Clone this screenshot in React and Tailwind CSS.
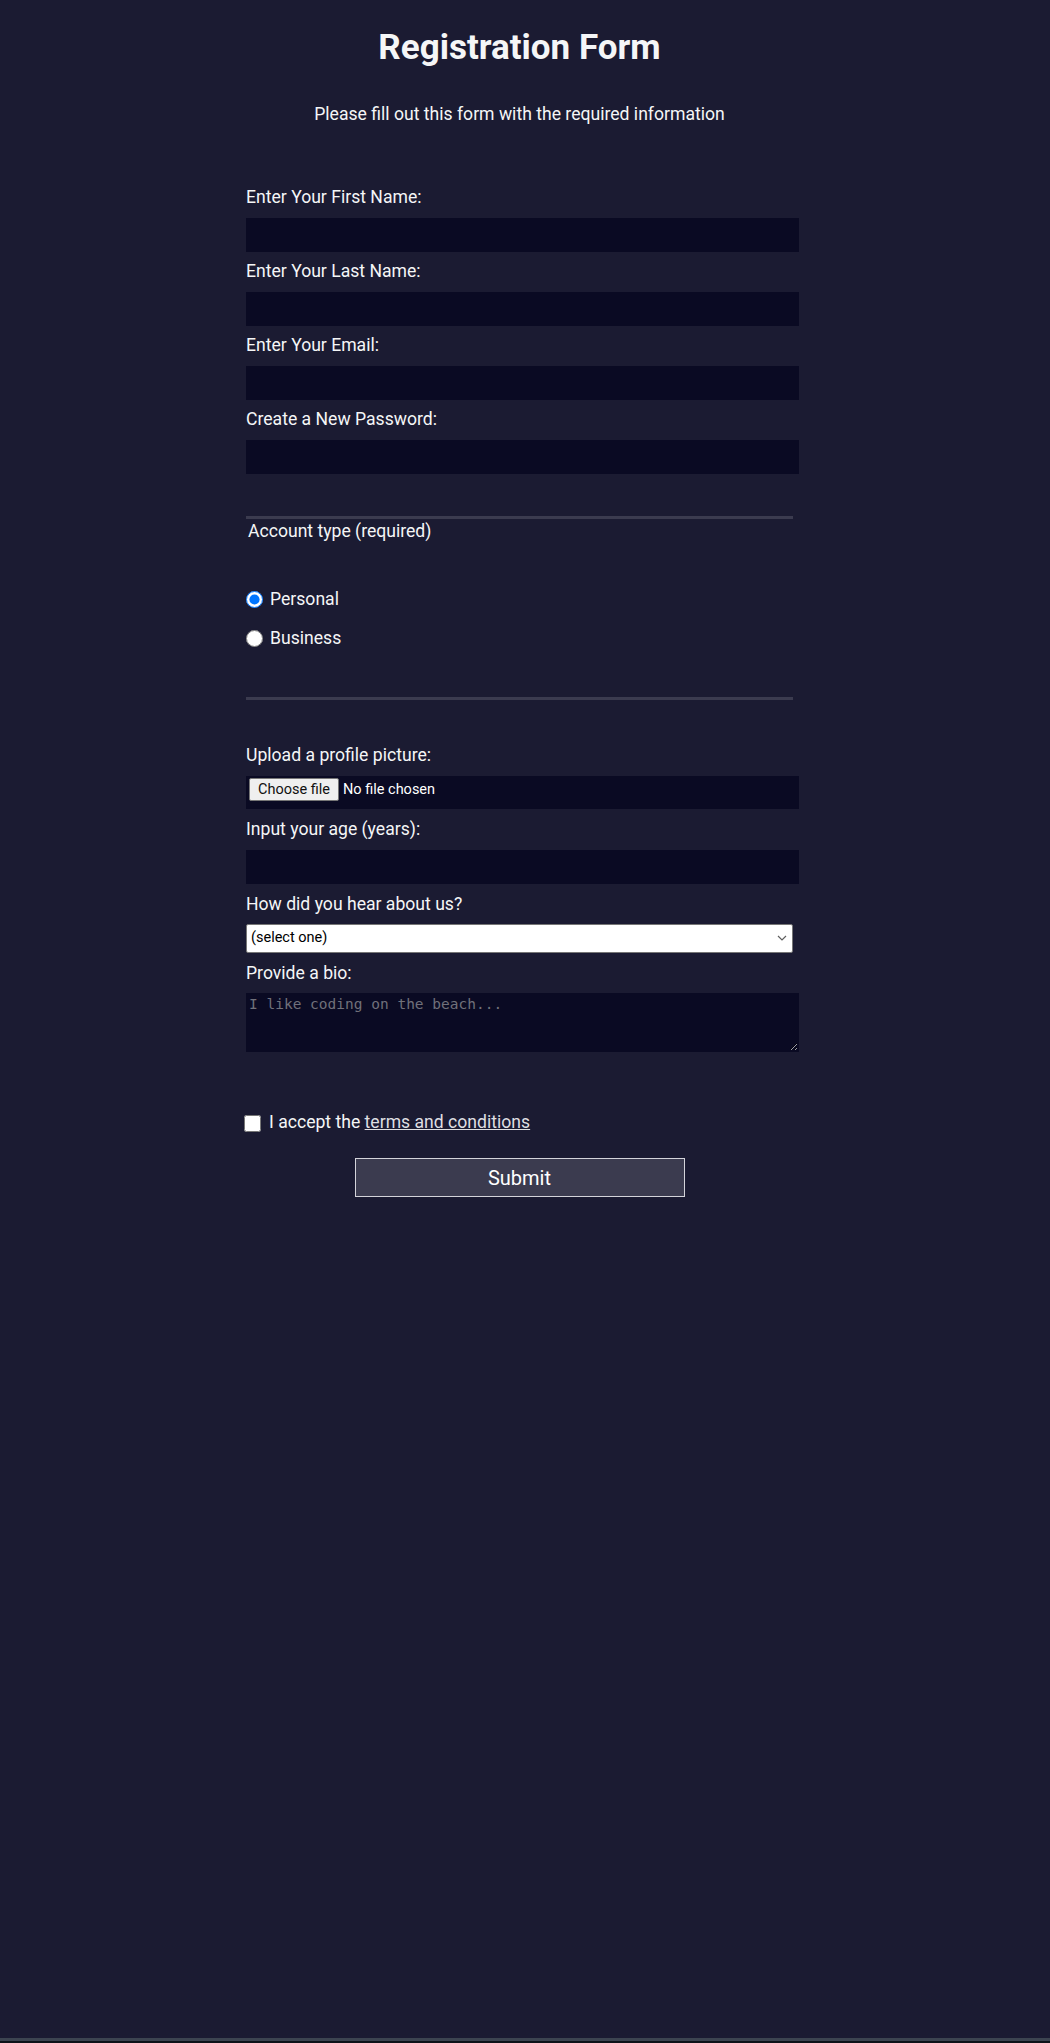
const inputCls = 'block w-[553px] h-[34px] bg-[#0a0a23] border border-[#0a0a23] text-white px-[2px] outline-none'

function Field({ label, gap = 'mt-[8.5px]', children }) {
  return (
    <label className={`block ${gap}`}>
      <span className="block">{label}</span>
      <span className="block mt-[9.5px]">{children}</span>
    </label>
  )
}

export default function App() {
  return (
    <div className="h-[2043px] overflow-hidden flex flex-col bg-[#1b1b32] text-[#f5f6f7] font-['Roboto',sans-serif] text-[17.6px] leading-[22px]">
      <div className="w-[1039px] flex-1 pt-[27px]">
        <h1 className="text-center text-[35px] leading-[42px] font-bold">Registration Form</h1>
        <p className="mt-[34px] text-center">Please fill out this form with the required information</p>

        <form className="w-[547px] mx-auto mt-[61px]">
          <div className="pb-[42px] border-b-[3px] border-[#3b3b4f]">
            <Field label="Enter Your First Name:" gap="">
              <input type="text" className={inputCls} />
            </Field>
            <Field label="Enter Your Last Name:">
              <input type="text" className={inputCls} />
            </Field>
            <Field label="Enter Your Email:">
              <input type="email" className={inputCls} />
            </Field>
            <Field label="Create a New Password:">
              <input type="password" className={inputCls} />
            </Field>
          </div>

          <div className="pt-[1.3px] pb-[48px] border-b-[3px] border-[#3b3b4f]">
            <p className="pl-[2px]">Account type (required)</p>
            <label className="flex items-start gap-[7px] mt-[46px]">
              <input type="radio" name="account-type" defaultChecked className="w-[17px] h-[17px] m-0 mt-[3.5px]" />
              Personal
            </label>
            <label className="flex items-start gap-[7px] mt-[17px]">
              <input type="radio" name="account-type" className="w-[17px] h-[17px] m-0 mt-[3px]" />
              Business
            </label>
          </div>

          <div className="pt-[44.5px]">
            <Field label="Upload a profile picture:" gap="">
              <span className="flex items-start w-[553px] h-[33.5px] bg-[#0a0a23] pl-[3px] pt-[2.5px]">
                <span className="flex items-center gap-[4px] text-[14.5px]">
                  <span className="h-[23px] px-[8px] flex items-center bg-[#efefef] text-[#111] border border-[#767676] rounded-[2px]">Choose file</span>
                  <span className="text-white">No file chosen</span>
                </span>
              </span>
            </Field>
            <Field label="Input your age (years):" gap="mt-[9px]">
              <input type="number" className={inputCls} />
            </Field>
            <Field label="How did you hear about us?" gap="mt-[9px]">
              <span className="relative block w-[547px]">
                <select className="block w-full h-[28.3px] appearance-none bg-white text-black text-[14.5px] border border-[#767676] rounded-[2px] pl-[4px]">
                  <option>(select one)</option>
                  <option>freeCodeCamp News</option>
                  <option>freeCodeCamp YouTube Channel</option>
                  <option>freeCodeCamp Forum</option>
                  <option>Other</option>
                </select>
                <svg className="absolute right-[6px] top-[11px] pointer-events-none" width="10" height="6" viewBox="0 0 10 6" fill="none">
                  <path d="M1 1l4 4 4-4" stroke="#5f5f5f" strokeWidth="1.2" />
                </svg>
              </span>
            </Field>
            <Field label="Provide a bio:" gap="mt-[9px]">
              <textarea
                rows={3}
                placeholder="I like coding on the beach..."
                className="block w-[553px] h-[59px] bg-[#0a0a23] border border-[#0a0a23] text-white p-[2px] font-['DejaVu_Sans_Mono',monospace] text-[14.5px] leading-[17px] placeholder:text-[#70707a] outline-none"
              />
            </Field>
          </div>

          <label className="flex items-start gap-[8px] mt-[59px] -ml-[2px]">
            <input type="checkbox" className="w-[17px] h-[17px] m-0 mt-[3.5px]" />
            <span>
              I accept the <a href="#" className="text-[#dfdfe2] underline">terms and conditions</a>
            </span>
          </label>

          <button type="submit" className="block w-[330px] h-[38.3px] mx-auto mt-[25.3px] bg-[#3b3b4f] border border-[#d4d4da] text-[20px] leading-[24px] text-white">
            Submit
          </button>
        </form>
      </div>
      <div className="h-[3px] bg-[#3c4450]" />
      <div className="h-[2px] bg-[#0c1218]" />
    </div>
  )
}
